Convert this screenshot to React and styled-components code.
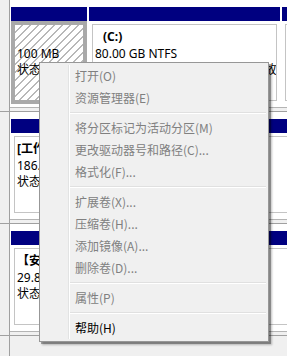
import React from 'react';
import styled, { createGlobalStyle } from 'styled-components';

const GlobalStyle = createGlobalStyle`
* {
    padding: 0;
    margin: 0;
    box-sizing: border-box;
}
body {
    background: #f0f0f0;
    font-family: "Noto Sans", "Noto Sans CJK SC", sans-serif;
    overflow: hidden;
}
`;

const Screen = styled.div`
position: relative;
width: 287px;
height: 356px;
overflow: hidden;
background: #f0f0f0;
`;

const DiskRow = styled.div`
display: flex;
height: 112px;
`;

const DiskLabel = styled.div`
width: 10px;
flex: none;
background: #f0f0f0;
border-right: 1px solid #a0a0a0;
border-bottom: 1px solid #a0a0a0;
`;

const PartArea = styled.div`
flex: 1;
display: flex;
gap: 2px;
padding: 7px 0 0 1px;
background: #fff;
border-bottom: 1px solid #a0a0a0;
box-shadow: inset 0 -3px 0 #f0f0f0, inset 0 -4px 0 #b4b4b4;
overflow: hidden;
`;

const Partition = styled.div`
flex: none;
width: ${(p) => p.width}px;
height: 97px;
display: flex;
flex-direction: column;
`;

const Header = styled.div`
height: 14px;
background: #000080;
`;

const Body = styled.div`
flex: 1;
padding: 3px;
background: ${(p) => (p.selected ? '#a9a9a9' : '#fff')};
`;

const Inner = styled.div`
height: 100%;
border: 1px solid ${(p) => (p.selected ? '#a9a9a9' : '#c4c4c4')};
padding: 4px 0 0 2px;
font-size: 12px;
line-height: 16.5px;
color: #000;
white-space: nowrap;
overflow: hidden;
background: ${(p) =>
    p.selected
        ? 'repeating-linear-gradient(135deg, #ffffff 0px, #ffffff 4.6px, #b8b8b8 4.6px, #b8b8b8 5.66px)'
        : '#fff'};
`;

const Line = styled.div`
font-weight: ${(p) => (p.bold ? 700 : 400)};
padding-left: ${(p) => p.indent || 0}px;
`;

const Menu = styled.div`
position: absolute;
left: 39px;
top: 62px;
width: 230px;
padding: 2px;
background: #f0f0f0;
border: 1px solid #979797;
box-shadow: 2px 2px 0 rgba(0, 0, 0, 0.3), 3px 3px 2px rgba(0, 0, 0, 0.25);
font-family: "Noto Sans CJK SC", "Noto Sans", sans-serif;
font-size: 12px;
&::before {
    content: '';
    position: absolute;
    top: 2px;
    bottom: 2px;
    left: 28px;
    width: 1px;
    background: #e2e3e3;
    box-shadow: 1px 0 0 #fff;
}
`;

const Item = styled.div`
position: relative;
height: 22px;
line-height: 22px;
padding-left: 33px;
color: ${(p) => (p.disabled ? '#808080' : '#000')};
`;

const Separator = styled.div`
position: relative;
height: 8px;
margin-left: 28px;
&::after {
    content: '';
    position: absolute;
    left: 0;
    right: 0;
    top: 3px;
    height: 1px;
    background: #e0e0e0;
    box-shadow: 0 1px 0 #fff;
}
`;

const disks = [
    [
        { width: 76, selected: true, lines: [{ text: '' }, { text: '100 MB' }, { text: '状态良好 (系统, 活动, 主分区)' }] },
        { width: 191, lines: [{ text: '(C:)', bold: true, indent: 8 }, { text: '80.00 GB NTFS' }, { text: '状态良好 (启动, 页面文件, 活动, 故障转储, 主分区)' }] },
        { width: 60, lines: [] },
    ],
    [
        { width: 400, lines: [{ text: '[工作] (D:)', bold: true }, { text: '186.30 GB NTFS' }, { text: '状态良好 (主分区)' }] },
    ],
    [
        { width: 400, lines: [{ text: '【安装盘】 (E:)', bold: true }, { text: '29.81 GB NTFS' }, { text: '状态良好 (主分区)' }] },
    ],
];

const menuItems = [
    '打开(O)',
    '资源管理器(E)',
    '-',
    '将分区标记为活动分区(M)',
    '更改驱动器号和路径(C)...',
    '格式化(F)...',
    '-',
    '扩展卷(X)...',
    '压缩卷(H)...',
    '添加镜像(A)...',
    '删除卷(D)...',
    '-',
    '属性(P)',
    '-',
    '帮助(H)',
];

const App = () => {
    return (
        <>
            <GlobalStyle />
            <Screen>
                {disks.map((parts, i) => (
                    <DiskRow key={i}>
                        <DiskLabel />
                        <PartArea>
                            {parts.map((part, j) => (
                                <Partition key={j} width={part.width}>
                                    <Header />
                                    <Body selected={part.selected}>
                                        <Inner selected={part.selected}>
                                            {part.lines.map((l, k) => (
                                                <Line key={k} bold={l.bold} indent={l.indent}>
                                                    {l.text || '\u00a0'}
                                                </Line>
                                            ))}
                                        </Inner>
                                    </Body>
                                </Partition>
                            ))}
                        </PartArea>
                    </DiskRow>
                ))}
                <DiskRow>
                    <DiskLabel />
                </DiskRow>

                <Menu>
                    {menuItems.map((label, i) =>
                        label === '-' ? (
                            <Separator key={i} />
                        ) : (
                            <Item key={i} disabled={label !== '帮助(H)'}>
                                {label}
                            </Item>
                        )
                    )}
                </Menu>
            </Screen>
        </>
    );
};

export default App;
